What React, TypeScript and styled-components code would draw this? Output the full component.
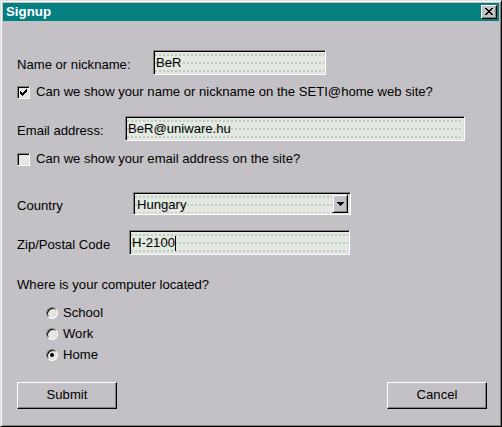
import React from "react";
import styled, { createGlobalStyle } from "styled-components";

const GlobalStyle = createGlobalStyle`
  html, body { margin: 0; padding: 0; background: #c3c1c5; }
  body { font-family: "Liberation Sans", Arial, sans-serif; font-size: 13px; color: #000; }
  * { box-sizing: border-box; }
`;

const FIELD_BG = "#e2e9e1";
const FACE = "#c3c1c5";

const Window = styled.div`
  width: 502px;
  height: 427px;
  background: ${FACE};
  border: 1px solid;
  border-color: #dfdfdf #000 #000 #dfdfdf;
  box-shadow: inset 1px 1px #fff, inset -1px -1px #808080;
  padding: 2px;
  display: flex;
  flex-direction: column;
`;

const TitleBar = styled.div`
  height: 18px;
  flex: none;
  background: #058080;
  color: #fff;
  font-weight: bold;
  font-size: 13.3px;
  line-height: 16px;
  display: flex;
  align-items: center;
  justify-content: space-between;
  padding: 0 2px 0 3px;
`;

const CloseButton = styled.div`
  width: 16px;
  height: 14px;
  background: ${FACE};
  border: 1px solid;
  border-color: #fff #000 #000 #fff;
  box-shadow: inset -1px -1px #808080;
  display: flex;
  align-items: center;
  justify-content: center;
  padding-bottom: 1px;
`;

const Body = styled.div`
  flex: 1;
  display: flex;
  flex-direction: column;
  padding: 0 12px 0 14px;
  line-height: 16px;
  font-size: 13.1px;
`;

const Row = styled.div<{ $top: number; $h: number; $indent?: number }>`
  display: flex;
  align-items: center;
  margin-top: ${(p) => p.$top}px;
  height: ${(p) => p.$h}px;
  margin-left: ${(p) => p.$indent ?? 0}px;
  flex: none;
`;

const Label = styled.span<{ $w: number }>`
  width: ${(p) => p.$w}px;
  flex: none;
  padding-top: 4px;
  white-space: nowrap;
`;

const sunken = `
  border: 1px solid;
  border-color: #808080 #fff #fff #808080;
  box-shadow: inset 1px 1px #000, inset -1px -1px #dfdfdf;
`;

const dots = `
  background-color: ${FIELD_BG};
  background-image: radial-gradient(circle at 1px 1px, #c0c8c0 0.7px, transparent 1px);
  background-size: 4px 8px;
  background-position: 1px 3px;
`;

const TextField = styled.div<{ $w: number; $h?: number }>`
  ${sunken}
  ${dots}
  width: ${(p) => p.$w}px;
  height: ${(p) => p.$h ?? 25}px;
  flex: none;
  display: flex;
  align-items: center;
  padding: 0 2px;
  white-space: nowrap;
`;

const Caret = styled.span`
  display: inline-block;
  width: 1px;
  height: 15px;
  background: #000;
  margin-top: 1px;
`;

const SelectBox = styled(TextField)`
  padding: 0 2px 0 3px;
  padding-top: 2px;
`;

const DropButton = styled.div`
  margin-left: auto;
  width: 16px;
  height: 19px;
  margin-top: -2px;
  background: ${FACE};
  border: 1px solid;
  border-color: #dfdfdf #000 #000 #dfdfdf;
  box-shadow: inset 1px 1px #fff, inset -1px -1px #808080;
  display: flex;
  align-items: center;
  justify-content: center;
`;

const CheckBox = styled.span`
  ${sunken}
  width: 13px;
  height: 13px;
  flex: none;
  background: ${FIELD_BG};
  display: flex;
  align-items: center;
  justify-content: center;
  margin-right: 6px;
`;

const Radio = styled.span`
  width: 12px;
  height: 12px;
  flex: none;
  border-radius: 50%;
  border: 1px solid;
  border-color: #808080 #fff #fff #808080;
  box-shadow: inset 1px 1px #000, inset -1px -1px #dfdfdf;
  background: ${FIELD_BG};
  display: flex;
  align-items: center;
  justify-content: center;
  margin-right: 5px;
`;

const RadioDot = styled.span`
  width: 4px;
  height: 4px;
  border-radius: 50%;
  background: #000;
`;

const ButtonRow = styled.div`
  display: flex;
  justify-content: space-between;
  margin-top: 19px;
  flex: none;
`;

const Button = styled.div`
  width: 100px;
  height: 27px;
  background: ${FACE};
  border: 1px solid;
  border-color: #fff #000 #000 #fff;
  box-shadow: inset -1px -1px #808080;
  display: flex;
  align-items: center;
  justify-content: center;
  padding-bottom: 1px;
`;

const Check = () => (
  <svg width="7" height="7" viewBox="0 0 7 7" shapeRendering="crispEdges">
    <path d="M0 2h1v3h-1zM1 3h1v3h-1zM2 4h1v3h-1zM3 3h1v3h-1zM4 2h1v3h-1zM5 1h1v3h-1zM6 0h1v3h-1z" fill="#000" />
  </svg>
);

const CloseX = () => (
  <svg width="8" height="7" viewBox="0 0 8 7" shapeRendering="crispEdges">
    <path d="M0 0h2v1h-2zM6 0h2v1h-2zM1 1h2v1h-2zM5 1h2v1h-2zM2 2h4v1h-4zM3 3h2v1h-2zM2 4h4v1h-4zM1 5h2v1h-2zM5 5h2v1h-2zM0 6h2v1h-2zM6 6h2v1h-2z" fill="#000" />
  </svg>
);

const DownArrow = () => (
  <svg width="7" height="4" viewBox="0 0 7 4" shapeRendering="crispEdges">
    <path d="M0 0h7v1h-7zM1 1h5v1h-5zM2 2h3v1h-3zM3 3h1v1h-1z" fill="#000" />
  </svg>
);

export default function App() {
  return (
    <>
      <GlobalStyle />
      <Window>
        <TitleBar>
          <span>Signup</span>
          <CloseButton>
            <CloseX />
          </CloseButton>
        </TitleBar>
        <Body>
          <Row $top={29} $h={25}>
            <Label $w={136}>Name or nickname:</Label>
            <TextField $w={173}>BeR</TextField>
          </Row>
          <Row $top={9} $h={16}>
            <CheckBox>
              <Check />
            </CheckBox>
            <span>Can we show your name or nickname on the SETI@home web site?</span>
          </Row>
          <Row $top={16} $h={25}>
            <Label $w={108}>Email address:</Label>
            <TextField $w={340}>BeR@uniware.hu</TextField>
          </Row>
          <Row $top={10} $h={16}>
            <CheckBox />
            <span>Can we show your email address on the site?</span>
          </Row>
          <Row $top={25} $h={23}>
            <Label $w={116}>Country</Label>
            <SelectBox $w={218} $h={23}>
              <span>Hungary</span>
              <DropButton>
                <DownArrow />
              </DropButton>
            </SelectBox>
          </Row>
          <Row $top={15} $h={25}>
            <Label $w={112}>Zip/Postal Code</Label>
            <TextField $w={221}>
              <span>H-2100</span>
              <Caret />
            </TextField>
          </Row>
          <Row $top={22} $h={16}>
            <span>Where is your computer located?</span>
          </Row>
          <Row $top={12} $h={16} $indent={29}>
            <Radio />
            <span>School</span>
          </Row>
          <Row $top={5} $h={16} $indent={29}>
            <Radio />
            <span>Work</span>
          </Row>
          <Row $top={5} $h={16} $indent={29}>
            <Radio>
              <RadioDot />
            </Radio>
            <span>Home</span>
          </Row>
          <ButtonRow>
            <Button>Submit</Button>
            <Button>Cancel</Button>
          </ButtonRow>
        </Body>
      </Window>
    </>
  );
}
